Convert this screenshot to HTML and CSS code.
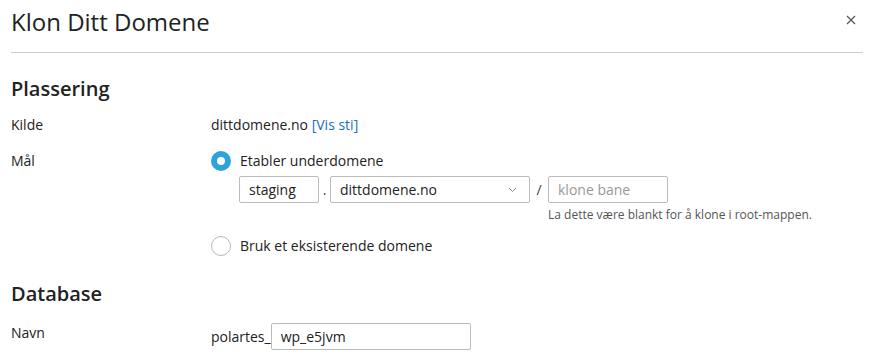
FILE: index.html
```html
<!DOCTYPE html>
<html lang="no">
<head>
<meta charset="utf-8">
<title>Klon Ditt Domene</title>
<link rel="stylesheet" href="styles.css">
</head>
<body>
<div class="modal">
  <header class="modal-head">
    <h1 class="modal-title">Klon Ditt Domene</h1>
    <button class="close" aria-label="Lukk">
      <svg width="10" height="10" viewBox="0 0 10 10"><path d="M1 1L9 9M9 1L1 9" stroke="#555" stroke-width="1.2" fill="none"/></svg>
    </button>
  </header>
  <section class="section">
    <h2 class="section-title">Plassering</h2>
    <div class="row row-source">
      <div class="label">Kilde</div>
      <div class="value">dittdomene.no <a class="link" href="#">[Vis sti]</a></div>
    </div>
    <div class="row row-target">
      <div class="label">Mål</div>
      <div class="value">
        <div class="radio-line">
          <span class="radio checked"></span>
          <span>Etabler underdomene</span>
        </div>
        <div class="fields">
          <div class="input w-staging">staging</div>
          <span class="sep">.</span>
          <div class="input select">
            <span>dittdomene.no</span>
            <svg width="9" height="6" viewBox="0 0 9 6"><path d="M1 1L4.5 4.5L8 1" stroke="#888" stroke-width="1" fill="none"/></svg>
          </div>
          <span class="sep slash">/</span>
          <div class="path-col">
            <div class="input w-path placeholder">klone bane</div>
            <div class="help">La dette være blankt for å klone i root-mappen.</div>
          </div>
        </div>
        <div class="radio-line second">
          <span class="radio"></span>
          <span>Bruk et eksisterende domene</span>
        </div>
      </div>
    </div>
  </section>
  <section class="section">
    <h2 class="section-title db">Database</h2>
    <div class="row row-db">
      <div class="label">Navn</div>
      <div class="value inline">
        <span class="prefix">polartes_</span>
        <div class="input w-db">wp_e5jvm</div>
      </div>
    </div>
  </section>
</div>
</body>
</html>
```
FILE: styles.css
```css
* { box-sizing: border-box; }
html, body { margin: 0; background: #fff; }
body {
  font-family: "Open Sans", "Noto Sans", sans-serif;
  font-size: 14px;
  color: #222;
}
.modal { padding: 0 10px 0 11px; }
.modal-head {
  display: flex;
  align-items: center;
  justify-content: space-between;
  height: 53px;
  border-bottom: 1px solid #ccc;
}
.modal-title {
  margin: 0;
  font-size: 24px;
  font-weight: 400;
  line-height: 30px;
  color: #222;
  padding-bottom: 8px;
}
.close {
  border: 0;
  background: none;
  padding: 0;
  margin: 0 7px 13px 0;
  width: 10px;
  height: 10px;
  display: flex;
}
.section-title {
  margin: 0;
  font-size: 20px;
  font-weight: 600;
  line-height: 28px;
  padding-top: 22px;
  color: #222;
}
.section-title.db { padding-top: 24px; }
.row { display: flex; line-height: 20px; }
.label { width: 200px; flex: none; }
.value { flex: 1; }
.row-source { margin-top: 12px; }
.row-target { margin-top: 16px; }
.link { color: #1a70b8; text-decoration: none; }
.radio-line { display: flex; align-items: center; gap: 9px; height: 20px; }
.radio {
  width: 20px; height: 20px; border-radius: 50%;
  border: 1px solid #b8b8b8; background: #fff; flex: none;
}
.radio.checked {
  border: 6px solid #2ca3dc;
  background: #fff;
}
.fields { display: flex; align-items: flex-start; margin: 5px 0 0 28px; }
.input {
  height: 27px;
  border: 1px solid #bbb;
  border-radius: 2px;
  padding: 0 9px;
  line-height: 25px;
  background: #fff;
}
.w-staging { width: 80px; }
.sep { width: 11px; text-align: center; line-height: 27px; color: #444; }
.slash { width: 18px; }
.select {
  width: 200px; display: flex; justify-content: space-between; align-items: center;
}
.select svg { margin-right: 3px; }
.w-path { width: 120px; }
.placeholder { color: #999; }
.help { font-size: 12px; color: #555; margin-top: 5px; line-height: 14px; }
.radio-line.second { margin-top: 14px; }
.row-db { margin-top: 15px; }
.inline { display: flex; align-items: center; }
.prefix { line-height: 20px; }
.w-db { width: 200px; }
```
